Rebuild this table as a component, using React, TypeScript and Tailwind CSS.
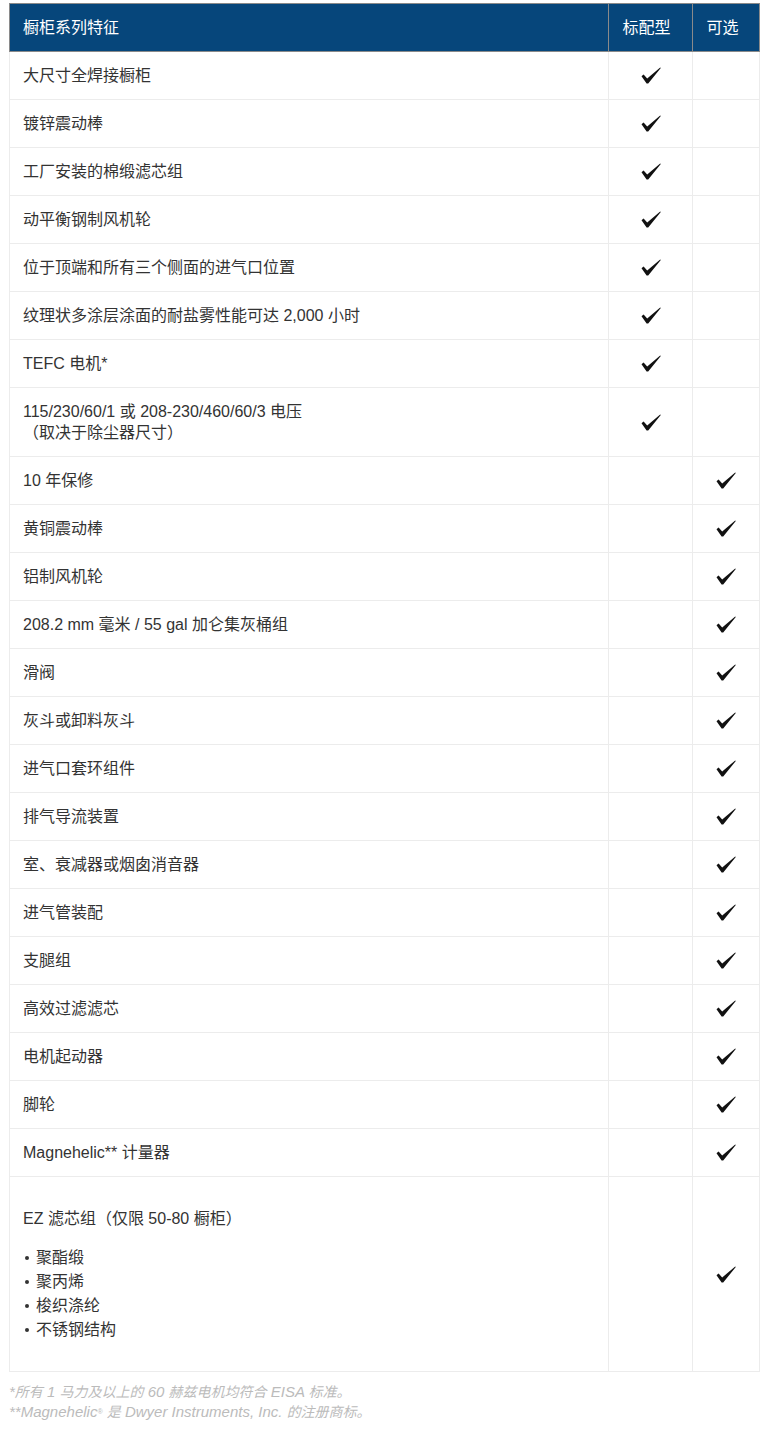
import { ReactNode } from 'react';

type Row = {
  label: ReactNode;
  standard: boolean;
};

const rows: Row[] = [
  { label: '大尺寸全焊接橱柜', standard: true },
  { label: '镀锌震动棒', standard: true },
  { label: '工厂安装的棉缎滤芯组', standard: true },
  { label: '动平衡钢制风机轮', standard: true },
  { label: '位于顶端和所有三个侧面的进气口位置', standard: true },
  { label: '纹理状多涂层涂面的耐盐雾性能可达 2,000 小时', standard: true },
  { label: 'TEFC 电机*', standard: true },
  {
    label: (
      <>
        115/230/60/1 或 208-230/460/60/3 电压
        <br />
        （取决于除尘器尺寸）
      </>
    ),
    standard: true,
  },
  { label: '10 年保修', standard: false },
  { label: '黄铜震动棒', standard: false },
  { label: '铝制风机轮', standard: false },
  { label: '208.2 mm 毫米 / 55 gal 加仑集灰桶组', standard: false },
  { label: '滑阀', standard: false },
  { label: '灰斗或卸料灰斗', standard: false },
  { label: '进气口套环组件', standard: false },
  { label: '排气导流装置', standard: false },
  { label: '室、衰减器或烟囱消音器', standard: false },
  { label: '进气管装配', standard: false },
  { label: '支腿组', standard: false },
  { label: '高效过滤滤芯', standard: false },
  { label: '电机起动器', standard: false },
  { label: '脚轮', standard: false },
  { label: 'Magnehelic** 计量器', standard: false },
];

const ezMedia = ['聚酯缎', '聚丙烯', '梭织涤纶', '不锈钢结构'];

function Check() {
  return (
    <svg width="20" height="17" viewBox="0 0 20 17" className="mx-auto block">
      <path d="M0.5 9.2 L2.6 7.6 L6.2 11.6 L19.2 0.4 L19.8 1 L7.2 16.6 L5.6 16.6 Z" fill="#111" />
    </svg>
  );
}

// latin bits of the footnotes run a touch wider than the CJK
function L({ children }: { children: ReactNode }) {
  return <span className="text-[15px]">{children}</span>;
}

export default function App() {
  return (
    <div
      className="bg-white pl-[9px] pt-[3px] pb-8 text-[#333]"
      style={{ fontFamily: '"Liberation Sans", "Noto Sans CJK SC", sans-serif' }}
    >
      <table className="w-[750px] border-collapse table-fixed">
        <colgroup>
          <col className="w-[599px]" />
          <col className="w-[84px]" />
          <col className="w-[67px]" />
        </colgroup>
        <thead>
          <tr className="bg-[#06467b] text-white text-[16px] h-[48px]">
            <th className="border border-[#8a8a8a] px-[13px] text-left font-normal">橱柜系列特征</th>
            <th className="border border-[#8a8a8a] pr-[8px] text-center font-normal">标配型</th>
            <th className="border border-[#8a8a8a] pr-[7px] text-center font-normal">可选</th>
          </tr>
        </thead>
        <tbody className="text-[16px] leading-[21px]">
          {rows.map((row, i) => (
            <tr key={i}>
              <td className="border border-[#ececec] px-[13px] py-[13px]">{row.label}</td>
              <td className="border border-[#ececec] align-middle">{row.standard && <Check />}</td>
              <td className="border border-[#ececec] align-middle">{!row.standard && <Check />}</td>
            </tr>
          ))}
          <tr>
            <td className="border border-[#ececec] px-[13px] py-[13px]">
              <p className="mt-[18px] mb-[17px]">EZ 滤芯组（仅限 50-80 橱柜）</p>
              <ul className="mb-[16px] leading-[24px]">
                {ezMedia.map((m) => (
                  <li key={m} className="flex items-center">
                    <span className="w-[4px] h-[4px] rounded-full bg-[#333] ml-[2px] mr-[7px]" />
                    {m}
                  </li>
                ))}
              </ul>
            </td>
            <td className="border border-[#ececec]" />
            <td className="border border-[#ececec] align-middle">
              <Check />
            </td>
          </tr>
        </tbody>
      </table>
      <div className="mt-[10px] text-[14px] leading-[20px] italic text-[#bbbbbb]">
        <p>
          <L>*</L>所有<L> 1 </L>马力及以上的<L> 60 </L>赫兹电机均符合<L> EISA </L>标准。
        </p>
        <p>
          <L>**Magnehelic</L>
          <sup className="text-[7px]">®</sup>
          <L> </L>是<L> Dwyer Instruments, Inc. </L>的注册商标。
        </p>
      </div>
    </div>
  );
}
